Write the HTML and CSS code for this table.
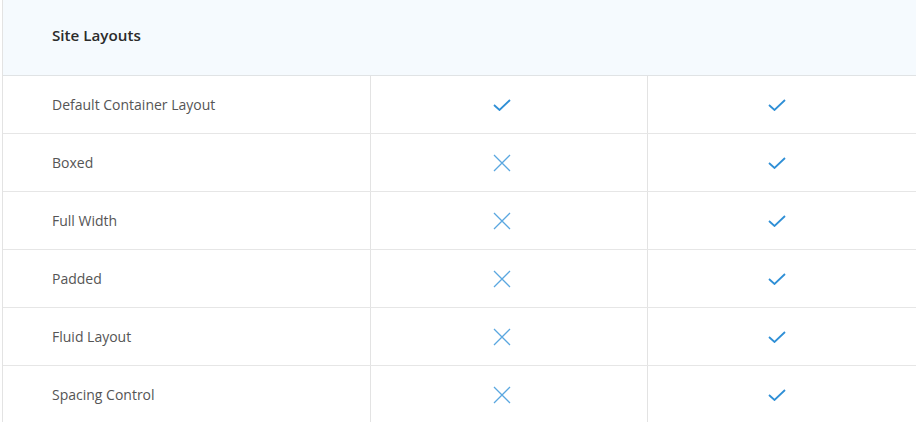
FILE: index.html
```html
<!DOCTYPE html>
<html>
<head>
<meta charset="utf-8">
<link rel="stylesheet" href="styles.css">
</head>
<body>
<div class="table">
  <div class="head">Site Layouts</div>
  <div class="row"><div class="label">Default Container Layout</div><div class="cell"><svg class="ok" viewBox="0 0 18 12"><path d="M1 6 L6.5 11 L17 1"/></svg></div><div class="cell last"><svg class="ok" viewBox="0 0 18 12"><path d="M1 6 L6.5 11 L17 1"/></svg></div></div>
  <div class="row"><div class="label">Boxed</div><div class="cell"><svg class="no" viewBox="0 0 18 18"><path d="M1 1 L17 17 M17 1 L1 17"/></svg></div><div class="cell last"><svg class="ok" viewBox="0 0 18 12"><path d="M1 6 L6.5 11 L17 1"/></svg></div></div>
  <div class="row"><div class="label">Full Width</div><div class="cell"><svg class="no" viewBox="0 0 18 18"><path d="M1 1 L17 17 M17 1 L1 17"/></svg></div><div class="cell last"><svg class="ok" viewBox="0 0 18 12"><path d="M1 6 L6.5 11 L17 1"/></svg></div></div>
  <div class="row"><div class="label">Padded</div><div class="cell"><svg class="no" viewBox="0 0 18 18"><path d="M1 1 L17 17 M17 1 L1 17"/></svg></div><div class="cell last"><svg class="ok" viewBox="0 0 18 12"><path d="M1 6 L6.5 11 L17 1"/></svg></div></div>
  <div class="row"><div class="label">Fluid Layout</div><div class="cell"><svg class="no" viewBox="0 0 18 18"><path d="M1 1 L17 17 M17 1 L1 17"/></svg></div><div class="cell last"><svg class="ok" viewBox="0 0 18 12"><path d="M1 6 L6.5 11 L17 1"/></svg></div></div>
  <div class="row"><div class="label">Spacing Control</div><div class="cell"><svg class="no" viewBox="0 0 18 18"><path d="M1 1 L17 17 M17 1 L1 17"/></svg></div><div class="cell last"><svg class="ok" viewBox="0 0 18 12"><path d="M1 6 L6.5 11 L17 1"/></svg></div></div>
</div>
</body>
</html>
```
FILE: styles.css
```css
html, body {
  margin: 0;
  padding: 0;
  background: #fff;
  overflow: hidden;
}
body {
  padding-left: 2px;
  font-family: "Open Sans", "Liberation Sans", sans-serif;
}
.table {
  border-left: 1px solid #e3e3e3;
  width: 930px;
}
.head {
  box-sizing: border-box;
  background: #f5fafe;
  border-bottom: 1px solid #e0e3e5;
  display: flex;
  align-items: center;
  padding-left: 49px;
  font-size: 15.2px;
  font-weight: 600;
  color: #2b2b2b;
  height: 76px;
  padding-bottom: 6px;
}
.row {
  display: grid;
  grid-template-columns: 368px 277px 1fr;
  height: 58px;
  box-sizing: border-box;
  border-bottom: 1px solid #e6e6e6;
}
.label {
  display: flex;
  align-items: center;
  padding-left: 49px;
  font-size: 14px;
  color: #555;
  border-right: 1px solid #e3e3e3;
}
.cell {
  display: flex;
  align-items: center;
  justify-content: center;
  border-right: 1px solid #e3e3e3;
  padding-right: 14px;
}
.cell.last {
  border-right: none;
  padding-right: 28px;
}
.ok {
  width: 18px;
  height: 12px;
  fill: none;
  stroke: #2f8fd6;
  stroke-width: 1.8;
}
.no {
  width: 18px;
  height: 18px;
  fill: none;
  stroke: #5aa7e0;
  stroke-width: 1.3;
}
```
